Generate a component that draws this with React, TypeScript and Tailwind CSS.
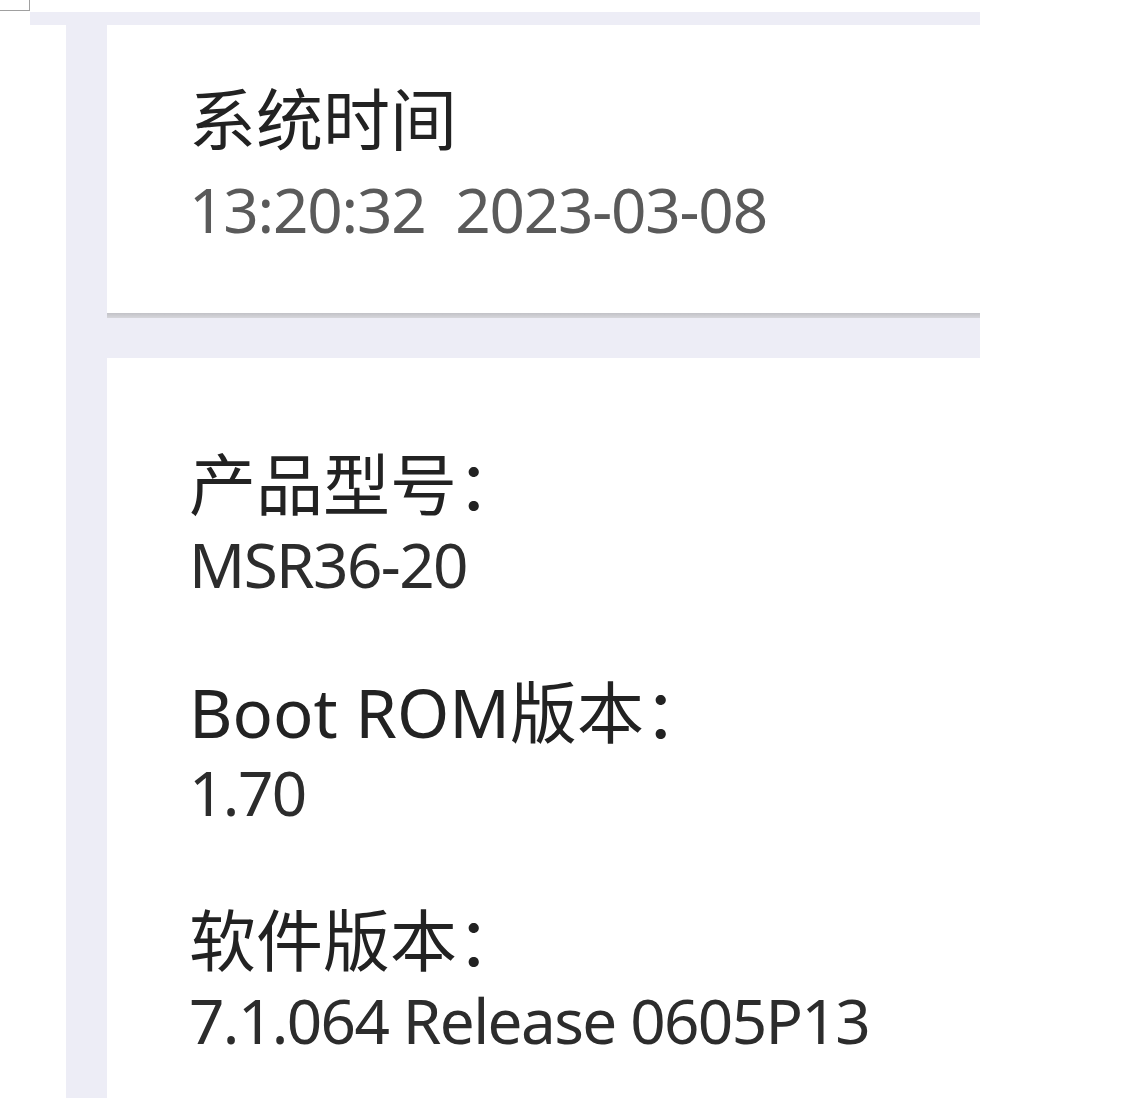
export default function App() {
  const items = [
    { label: '产品型号：', value: 'MSR36-20' },
    { label: 'Boot ROM版本：', value: '1.70' },
    { label: '软件版本：', value: '7.1.064 Release 0605P13' }
  ];

  return (
    <div
      className="h-[1098px] w-[1132px] overflow-hidden bg-white"
      style={{ fontFamily: '"Noto Sans", "Noto Sans CJK SC", sans-serif' }}
    >
      {/* tiny corner box */}
      <div className="h-[11px] w-[30px] border-r border-b border-[#a0a0a0]" />

      <div className="ml-[30px] mt-px flex h-[1086px] w-[950px] flex-col">
        <div className="h-[13px] bg-[#ededf6]" />
        <div className="ml-[36px] flex flex-1">
          <div className="w-[41px] bg-[#ededf6]" />
          <div className="flex flex-1 flex-col">
            {/* system time card */}
            <div className="h-[288px] bg-white pl-[82px] pt-[54px]">
              <div className="text-[67px] leading-[80px] text-[#222]">系统时间</div>
              <div className="mt-[10px] text-[62px] leading-[80px] tracking-[-1.2px] text-[#5a5a5a]">
                13:20:32&nbsp;&nbsp;2023-03-08
              </div>
            </div>
            <div className="h-[5px] bg-gradient-to-b from-[#c2c2c7] to-[#d6d6db]" />
            <div className="h-[40px] bg-[#ededf6]" />

            {/* device info card */}
            <div className="flex flex-1 flex-col gap-[68px] bg-white pl-[82px] pt-[86px]">
              {items.map((item) => (
                <div key={item.label}>
                  <div className="text-[67px] leading-[80px] text-[#222]">{item.label}</div>
                  <div className="text-[62px] leading-[80px] tracking-[-1.6px] text-[#2c2c2c]">
                    {item.value}
                  </div>
                </div>
              ))}
            </div>
          </div>
        </div>
      </div>
    </div>
  );
}
